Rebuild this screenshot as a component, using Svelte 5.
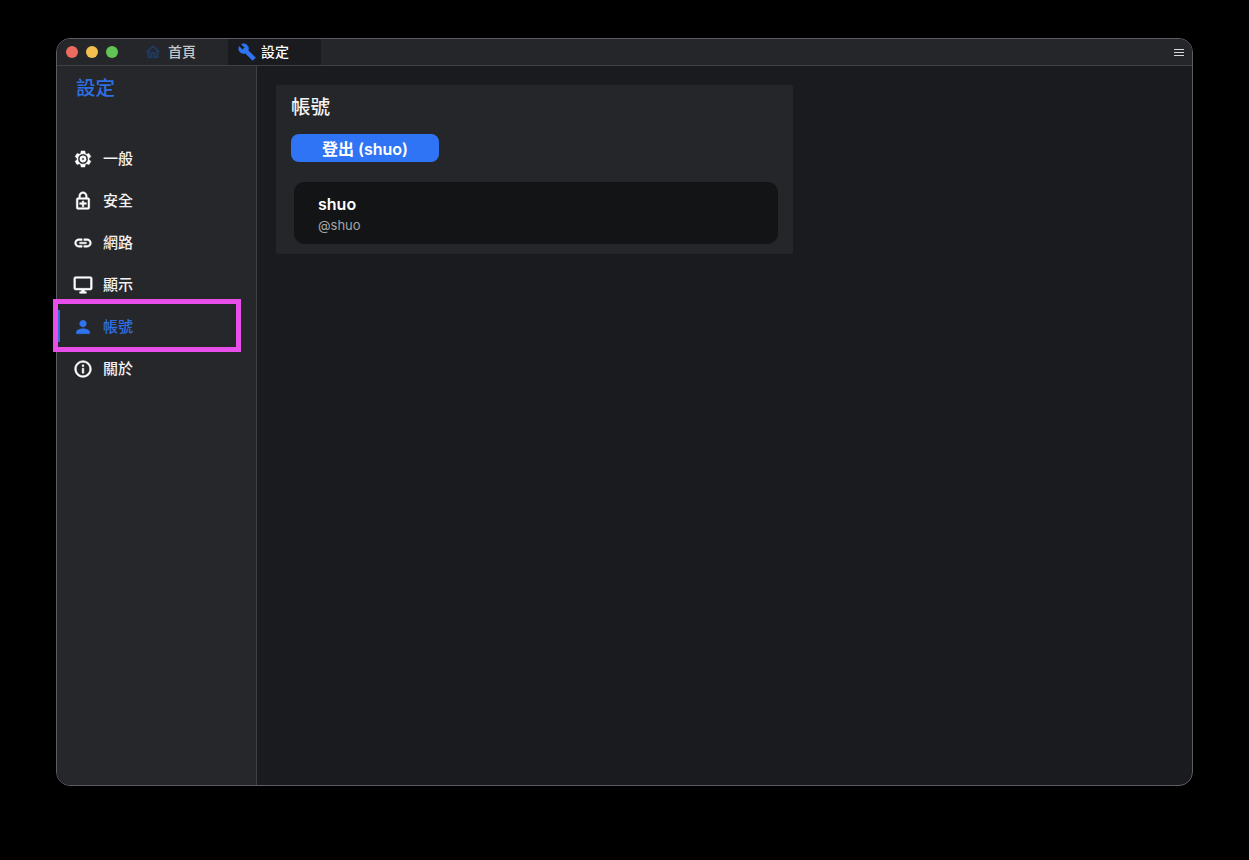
<script>
  const icons = {
    general: 'M19.14 12.94c.04-.3.06-.61.06-.94 0-.32-.02-.64-.07-.94l2.03-1.58c.18-.14.23-.41.12-.61l-1.92-3.32c-.12-.22-.37-.29-.59-.22l-2.39.96c-.5-.38-1.03-.7-1.62-.94l-.36-2.54c-.04-.24-.24-.41-.48-.41h-3.84c-.24 0-.43.17-.47.41l-.36 2.54c-.59.24-1.13.57-1.62.94l-2.39-.96c-.22-.08-.47 0-.59.22L2.74 8.87c-.12.21-.08.47.12.61l2.03 1.58c-.05.3-.09.63-.09.94s.02.64.07.94l-2.03 1.58c-.18.14-.23.41-.12.61l1.92 3.32c.12.22.37.29.59.22l2.39-.96c.5.38 1.03.7 1.62.94l.36 2.54c.05.24.24.41.48.41h3.84c.24 0 .44-.17.47-.41l.36-2.54c.59-.24 1.13-.56 1.62-.94l2.39.96c.22.08.47 0 .59-.22l1.92-3.32c.12-.22.07-.47-.12-.61l-2.01-1.58zM12 5.8a6.2 6.2 0 1 0 0 12.4 6.2 6.2 0 1 0 0-12.4zM12 8.2a3.8 3.8 0 1 1 0 7.6 3.8 3.8 0 1 1 0-7.6zM12 10.5a1.5 1.5 0 1 0 0 3 1.5 1.5 0 1 0 0-3z',
    security: 'M18 8h-1V6c0-2.76-2.24-5-5-5S7 3.24 7 6v2H6c-1.1 0-2 .9-2 2v10c0 1.1.9 2 2 2h12c1.1 0 2-.9 2-2V10c0-1.1-.9-2-2-2zM8.9 6c0-1.71 1.39-3.1 3.1-3.1s3.1 1.39 3.1 3.1v2H8.9V6zM18 20H6V10h12v10zM13 12v2h3v2h-3v3h-2v-3H8v-2h3v-2h2z',
    network: 'M3.9 12c0-1.71 1.39-3.1 3.1-3.1h4V7H7c-2.76 0-5 2.24-5 5s2.24 5 5 5h4v-1.9H7c-1.71 0-3.1-1.39-3.1-3.1zM8 13h8v-2H8v2zm9-6h-4v1.9h4c1.71 0 3.1 1.39 3.1 3.1s-1.39 3.1-3.1 3.1h-4V17h4c2.76 0 5-2.24 5-5s-2.24-5-5-5z',
    display: 'M21 2H3c-1.1 0-2 .9-2 2v12c0 1.1.9 2 2 2h7v2H8v2h8v-2h-2v-2h7c1.1 0 2-.9 2-2V4c0-1.1-.9-2-2-2zm0 14H3V4h18v12z',
    account: 'M12 12c2.21 0 4-1.79 4-4s-1.79-4-4-4-4 1.79-4 4 1.79 4 4 4zm0 2c-2.67 0-8 1.34-8 4v2h16v-2c0-2.66-5.33-4-8-4z',
    about: 'M11 7h2v2h-2zm0 4h2v6h-2zm1-9C6.48 2 2 6.48 2 12s4.48 10 10 10 10-4.48 10-10S17.52 2 12 2zm0 18c-4.41 0-8-3.59-8-8s3.59-8 8-8 8 3.59 8 8-3.59 8-8 8z'
  }

  const menu = [
    { key: 'general', label: '一般' },
    { key: 'security', label: '安全' },
    { key: 'network', label: '網路' },
    { key: 'display', label: '顯示' },
    { key: 'account', label: '帳號' },
    { key: 'about', label: '關於' }
  ]

  let active = $state('account')
</script>

<div class="window">
  <header class="titlebar">
    <div class="lights">
      <span class="light red"></span>
      <span class="light yellow"></span>
      <span class="light green"></span>
    </div>
    <div class="tab">
      <svg class="home-icon" viewBox="0 0 24 24"><path d="M12 5.69l5 4.5V18h-2v-6H9v6H7v-7.81l5-4.5M12 3L2 12h3v8h6v-6h2v6h6v-8h3L12 3z" /></svg>
      <span>首頁</span>
    </div>
    <div class="tab current">
      <svg class="wrench-icon" viewBox="0 0 24 24"><path d="M22.7 19l-9.1-9.1c.9-2.3.4-5-1.5-6.9-2-2-5-2.4-7.4-1.3L9 6 6 9 1.6 4.7C.4 7.1.9 10.1 2.9 12.1c1.9 1.9 4.6 2.4 6.9 1.5l9.1 9.1c.4.4 1 .4 1.4 0l2.3-2.3c.5-.4.5-1.1.1-1.4z" /></svg>
      <span>設定</span>
    </div>
    <button class="burger" aria-label="menu"><i></i><i></i><i></i></button>
  </header>

  <div class="body">
    <aside class="sidebar">
      <h1>設定</h1>
      <nav>
        {#each menu as item}
          <button class="item" class:active={active === item.key} onclick={() => (active = item.key)}>
            <svg viewBox="0 0 24 24"><path fill-rule="evenodd" d={icons[item.key]} /></svg>
            <span>{item.label}</span>
          </button>
        {/each}
      </nav>
    </aside>

    <main class="content">
      <section class="card">
        <h2>帳號</h2>
        <button class="logout">登出 (shuo)</button>
        <div class="user">
          <div class="name">shuo</div>
          <div class="handle">@shuo</div>
        </div>
      </section>
    </main>
  </div>
</div>

<div class="highlight"></div>

<style>
  :global(body) {
    margin: 0;
    background: #000;
  }

  .window {
    box-sizing: border-box;
    width: 1137px;
    height: 748px;
    margin: 38px 0 0 56px;
    display: flex;
    flex-direction: column;
    border: 1px solid #5c5d60;
    border-radius: 14px;
    overflow: hidden;
    background: #1a1b1f;
    color: #fff;
    font-family: Inter, 'Noto Sans CJK TC', sans-serif;
  }

  .titlebar {
    height: 26px;
    flex: none;
    display: flex;
    align-items: stretch;
    background: #25262a;
    border-bottom: 1px solid #3f4043;
  }

  .lights {
    display: flex;
    align-items: center;
    gap: 8px;
    width: 78px;
    padding-left: 9px;
    box-sizing: border-box;
  }

  .light {
    width: 12px;
    height: 12px;
    border-radius: 50%;
  }

  .red { background: #ed6a5e; }
  .yellow { background: #f4bf4f; }
  .green { background: #61c554; }

  .tab {
    width: 93px;
    display: flex;
    align-items: center;
    gap: 5px;
    padding-left: 10px;
    box-sizing: border-box;
    font-size: 14px;
    font-weight: 500;
    color: #c4c5c7;
  }

  .tab:not(.current) {
    padding-left: 9px;
    gap: 6px;
  }

  .tab span {
    margin-top: -2px;
  }

  .tab.current {
    background: #1a1b1f;
    color: #fff;
  }

  .home-icon {
    width: 18px;
    height: 18px;
    fill: #1f3d63;
    stroke: #1f3d63;
    stroke-width: 0.5;
  }

  .wrench-icon {
    width: 18px;
    height: 18px;
    fill: #2f74f0;
    stroke: #2f74f0;
    stroke-width: 0.8;
  }

  .burger {
    margin-left: auto;
    margin-right: 8px;
    padding: 0;
    width: 10px;
    display: flex;
    flex-direction: column;
    justify-content: center;
    gap: 2px;
    background: none;
    border: none;
  }

  .burger i {
    display: block;
    height: 1px;
    background: #d8d8d8;
  }

  .body {
    flex: 1;
    display: flex;
    min-height: 0;
  }

  .sidebar {
    width: 199px;
    flex: none;
    background: #26272b;
    border-right: 1px solid #3f4043;
  }

  h1 {
    margin: 9px 0 0 19px;
    height: 27px;
    font-size: 19.5px;
    line-height: 27px;
    font-weight: 500;
    color: #2f6fe4;
  }

  nav {
    margin-top: 35px;
    display: flex;
    flex-direction: column;
  }

  .item {
    height: 42px;
    display: flex;
    align-items: center;
    gap: 10px;
    padding: 0 0 0 16px;
    background: none;
    border: none;
    color: #f2f2f2;
    font: inherit;
    font-size: 15px;
    font-weight: 500;
    text-align: left;
    position: relative;
  }

  .item span {
    margin-top: -1px;
  }

  .item svg {
    width: 20px;
    height: 20px;
    margin-top: 1px;
    fill: #fff;
    stroke: #fff;
    stroke-width: 0.6;
    flex: none;
  }

  .item.active {
    color: #2f6fe4;
  }

  .item.active svg {
    fill: #2f74f0;
    stroke: #2f74f0;
  }

  .item.active::before {
    content: '';
    position: absolute;
    left: 1px;
    top: 5px;
    bottom: 5px;
    width: 2px;
    background: #2f6fe4;
  }

  .content {
    flex: 1;
    padding: 19px;
  }

  .card {
    box-sizing: border-box;
    width: 517px;
    height: 169px;
    padding: 8px 15px 10px;
    background: #25262a;
    border-radius: 2px;
  }

  h2 {
    margin: 0;
    font-size: 19.5px;
    line-height: 28px;
    font-weight: 500;
    color: #f4f4f4;
  }

  .logout {
    display: block;
    width: 148px;
    height: 28px;
    margin: 13px 0 0 0;
    padding: 0;
    border: none;
    border-radius: 8px;
    background: #2f74f5;
    color: #fff;
    font: inherit;
    font-size: 16px;
    font-weight: 600;
  }

  .user {
    box-sizing: border-box;
    width: 484px;
    height: 62px;
    margin: 20px 0 0 3px;
    padding: 12px 24px;
    border-radius: 10px;
    background: #131416;
  }

  .name {
    font-size: 16px;
    line-height: 21px;
    font-weight: 600;
  }

  .handle {
    margin-top: 2px;
    font-size: 13px;
    line-height: 16px;
    color: #a4a5a6;
  }

  .highlight {
    position: absolute;
    left: 53px;
    top: 299px;
    width: 188px;
    height: 53px;
    box-sizing: border-box;
    border: 5px solid #e84fea;
    pointer-events: none;
  }
</style>
